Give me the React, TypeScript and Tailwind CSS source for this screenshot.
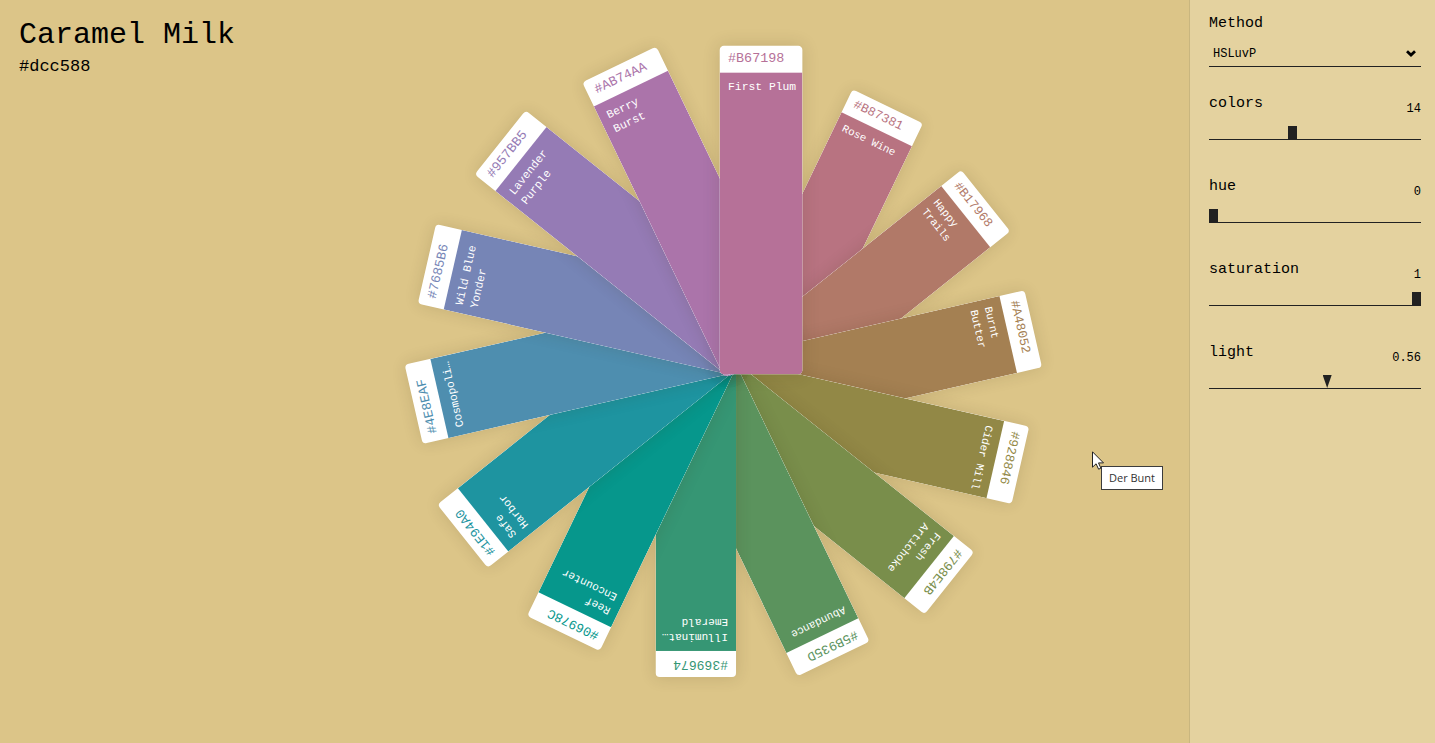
import { useState } from "react";

type Swatch = { hex: string; lines: string[] };

/* Painted in order, so the last swatch lies on top of the fan. */
const swatches: Swatch[] = [
  { hex: "#B87381", lines: ["Rose Wine"] },
  { hex: "#B17968", lines: ["Happy", "Trails"] },
  { hex: "#A48052", lines: ["Burnt", "Butter"] },
  { hex: "#928846", lines: ["Cider Mill"] },
  { hex: "#798E4B", lines: ["Fresh", "Artichoke"] },
  { hex: "#5B935D", lines: ["Abundance"] },
  { hex: "#369674", lines: ["Illuminat…", "Emerald"] },
  { hex: "#06978C", lines: ["Reef", "Encounter"] },
  { hex: "#1E94A0", lines: ["Safe", "Harbor"] },
  { hex: "#4E8EAF", lines: ["Cosmopoli…"] },
  { hex: "#7685B6", lines: ["Wild Blue", "Yonder"] },
  { hex: "#957BB5", lines: ["Lavender", "Purple"] },
  { hex: "#AB74AA", lines: ["Berry", "Burst"] },
  { hex: "#B67198", lines: ["First Plum"] },
];

function SwatchCard({ swatch, index, count }: { swatch: Swatch; index: number; count: number }) {
  const turn = ((index % count) * 360) / count;
  const scale = 0.974 + index * 0.0042;
  return (
    <article
      className="absolute top-[10px] left-[316px] flex h-[318px] w-20 origin-[8px_310px] flex-col overflow-hidden rounded bg-white shadow-[0_0_16px_rgba(60,40,0,0.14)]"
      style={{ transform: `rotate(${turn}deg) scale(${scale})` }}
    >
      <p className="pl-2 text-[13px] leading-[26px]" style={{ color: swatch.hex }}>
        {swatch.hex}
      </p>
      <h2
        className="grow px-2 pt-[7px] text-[11px] leading-[15px] whitespace-nowrap text-white"
        style={{ backgroundColor: swatch.hex }}
      >
        {swatch.lines.map((line) => (
          <span key={line} className="block">
            {line}
          </span>
        ))}
      </h2>
    </article>
  );
}

type SliderProps = {
  name: string;
  min: number;
  max: number;
  step: number;
  initial: number;
  pointed?: boolean;
};

function Slider({ name, min, max, step, initial, pointed = false }: SliderProps) {
  const [value, setValue] = useState(initial);
  return (
    <div className="flex h-[83px] flex-col">
      <div className="flex h-6 justify-between">
        <label htmlFor={name} className="text-[15px] leading-6">
          {name}
        </label>
        <output htmlFor={name} className="pt-[5px] text-xs leading-6">
          {value}
        </output>
      </div>
      <input
        id={name}
        type="range"
        min={min}
        max={max}
        step={step}
        value={value}
        onChange={(e) => setValue(Number(e.target.value))}
        className={
          "mt-[10px] block h-[14px] w-full appearance-none border-b border-[#212121] bg-transparent outline-none [&::-webkit-slider-thumb]:h-[13px] [&::-webkit-slider-thumb]:w-[9px] [&::-webkit-slider-thumb]:appearance-none [&::-webkit-slider-thumb]:bg-[#212121]" +
          (pointed ? " [&::-webkit-slider-thumb]:[clip-path:polygon(0_0,100%_0,50%_100%)]" : "")
        }
      />
    </div>
  );
}

export default function App() {
  return (
    <div className="flex min-h-screen bg-[#dcc588] font-['Liberation_Mono',monospace] text-black">
      <main className="relative grid grow">
        <header className="col-start-1 row-start-1 self-start pt-[15px] pl-[19px]">
          <h1 className="text-[30px] leading-10">Caramel Milk</h1>
          <p className="text-[17px] leading-6">#dcc588</p>
        </header>
        <section
          aria-label="Palette"
          className="relative col-start-1 row-start-1 mb-[11px] ml-[259px] size-[640px] place-self-center"
        >
          {swatches.map((swatch, i) => (
            <SwatchCard key={swatch.hex} swatch={swatch} index={i + 1} count={swatches.length} />
          ))}
        </section>
        <svg
          className="absolute top-[451px] left-[1092px] h-[19px] w-3"
          viewBox="0 0 12 19"
          aria-hidden="true"
        >
          <path
            d="M.5.8v15.4l3.6-3.4 2.5 5.4 2.3-1-2.4-5.3h5z"
            fill="#fff"
            stroke="#222"
            strokeWidth="1"
          />
        </svg>
        <div
          role="tooltip"
          className="absolute top-[466px] left-[1101px] border border-[#3c3c3c] bg-white px-[7px] font-['Open_Sans',sans-serif] text-[11px] leading-[22px] text-[#333]"
        >
          Der Bunt
        </div>
      </main>
      <aside className="w-[246px] shrink-0 border-l border-[#c9b67f] bg-[#e4d29f] pt-3 pr-[14px] pl-[19px]">
        <div className="mb-[25px]">
          <label htmlFor="method" className="block text-[15px] leading-6">
            Method
          </label>
          <div className="relative mt-[6px] border-b border-[#212121]">
            <select
              id="method"
              defaultValue="HSLuvP"
              className="block h-6 w-full appearance-none bg-transparent pl-1 text-xs leading-6 outline-none"
            >
              <option>HSLuvP</option>
              <option>HSLuv</option>
              <option>HSL</option>
            </select>
            <svg
              className="pointer-events-none absolute top-2 right-[5px] h-[7px] w-[10px]"
              viewBox="0 0 10 7"
              aria-hidden="true"
            >
              <path d="M1 1.2 5 5l4-3.8" fill="none" stroke="#000" strokeWidth="2.8" />
            </svg>
          </div>
        </div>
        <Slider name="colors" min={2} max={33} step={1} initial={14} />
        <Slider name="hue" min={0} max={360} step={1} initial={0} />
        <Slider name="saturation" min={0} max={1} step={0.01} initial={1} />
        <Slider name="light" min={0} max={1} step={0.01} initial={0.56} pointed />
      </aside>
    </div>
  );
}
